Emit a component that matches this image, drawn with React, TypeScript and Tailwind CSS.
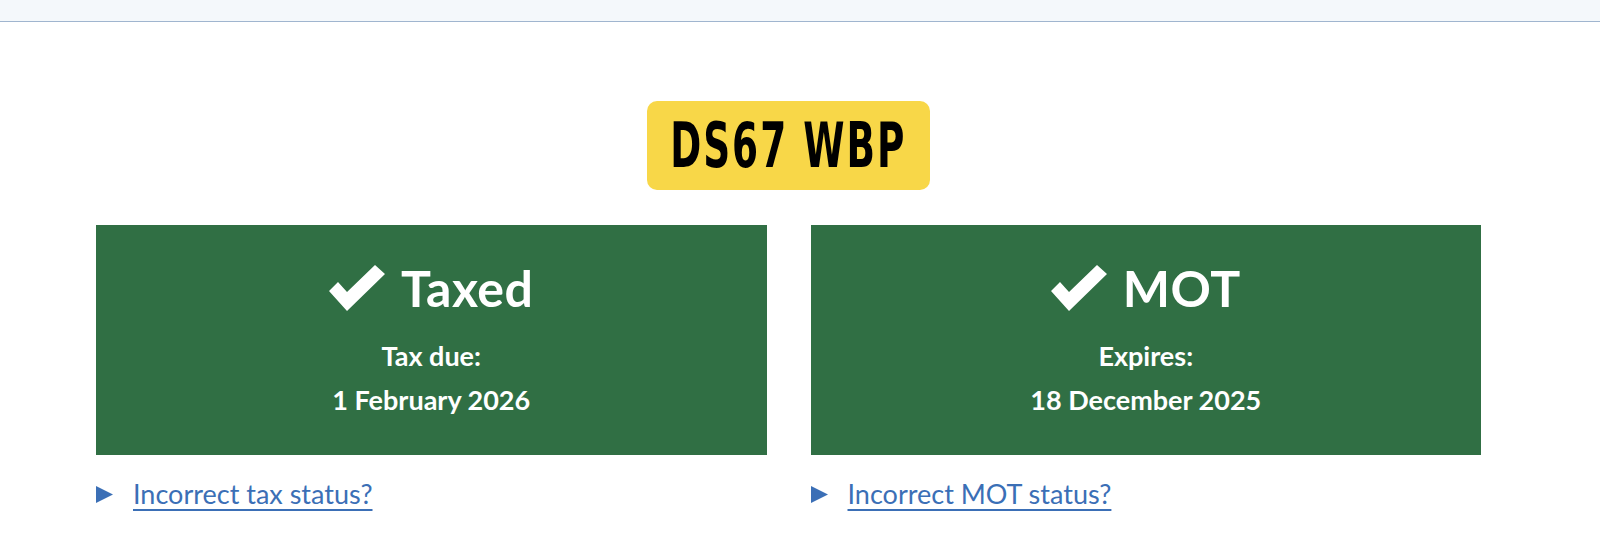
const statuses = [
  {
    title: "Taxed",
    label: "Tax due:",
    date: "1 February 2026",
    link: "Incorrect tax status?",
  },
  {
    title: "MOT",
    label: "Expires:",
    date: "18 December 2025",
    link: "Incorrect MOT status?",
  },
];

function Tick() {
  return (
    <svg width="56" height="46" viewBox="0 0 56 46" className="shrink-0">
      <polygon points="0,26 9,17 18,27 46,0 56,9 18,46" fill="white" />
    </svg>
  );
}

function Arrow() {
  return (
    <svg width="17" height="17" viewBox="0 0 17 17" className="shrink-0">
      <polygon points="0,0 17,8.5 0,17" fill="#3b6fb6" />
    </svg>
  );
}

export default function App() {
  return (
    <div className="min-h-[551px] bg-white font-['Lato',sans-serif]">
      <header className="h-[22px] bg-[#f4f8fb] border-b border-[#a0b5cf]" />

      <main className="ml-[96px] w-[1385px] pt-[79px]">
        <div className="flex justify-center">
          <div className="flex h-[89px] w-[283px] items-center justify-center rounded-[10px] bg-[#f8d748]">
            <span className="inline-block shrink-0 scale-x-[0.67] whitespace-nowrap font-['DejaVu_Sans_Condensed',sans-serif] text-[62px] font-bold leading-none tracking-[3px] text-black">
              DS67 WBP
            </span>
          </div>
        </div>

        <div className="mt-[35px] grid grid-cols-2 gap-x-[44px]">
          {statuses.map((s) => (
            <div key={s.title}>
              <div className="h-[230px] bg-[#306f44] pt-[38px] text-center text-white">
                <div className="flex items-center justify-center gap-[16px]">
                  <Tick />
                  <h2 className="text-[50px] font-bold leading-[50px] tracking-[0.5px]">
                    {s.title}
                  </h2>
                </div>
                <p className="mt-[21px] text-[27px] font-bold leading-[44px]">
                  {s.label}
                </p>
                <p className="text-[27px] font-bold leading-[44px]">
                  {s.date}
                </p>
              </div>

              <div className="mt-[21px] flex items-center gap-[20px]">
                <Arrow />
                <a
                  href="#"
                  className="text-[27px] leading-[36px] text-[#3b6fb6] underline decoration-[1.5px] underline-offset-[5px]"
                >
                  {s.link}
                </a>
              </div>
            </div>
          ))}
        </div>
      </main>
    </div>
  );
}
